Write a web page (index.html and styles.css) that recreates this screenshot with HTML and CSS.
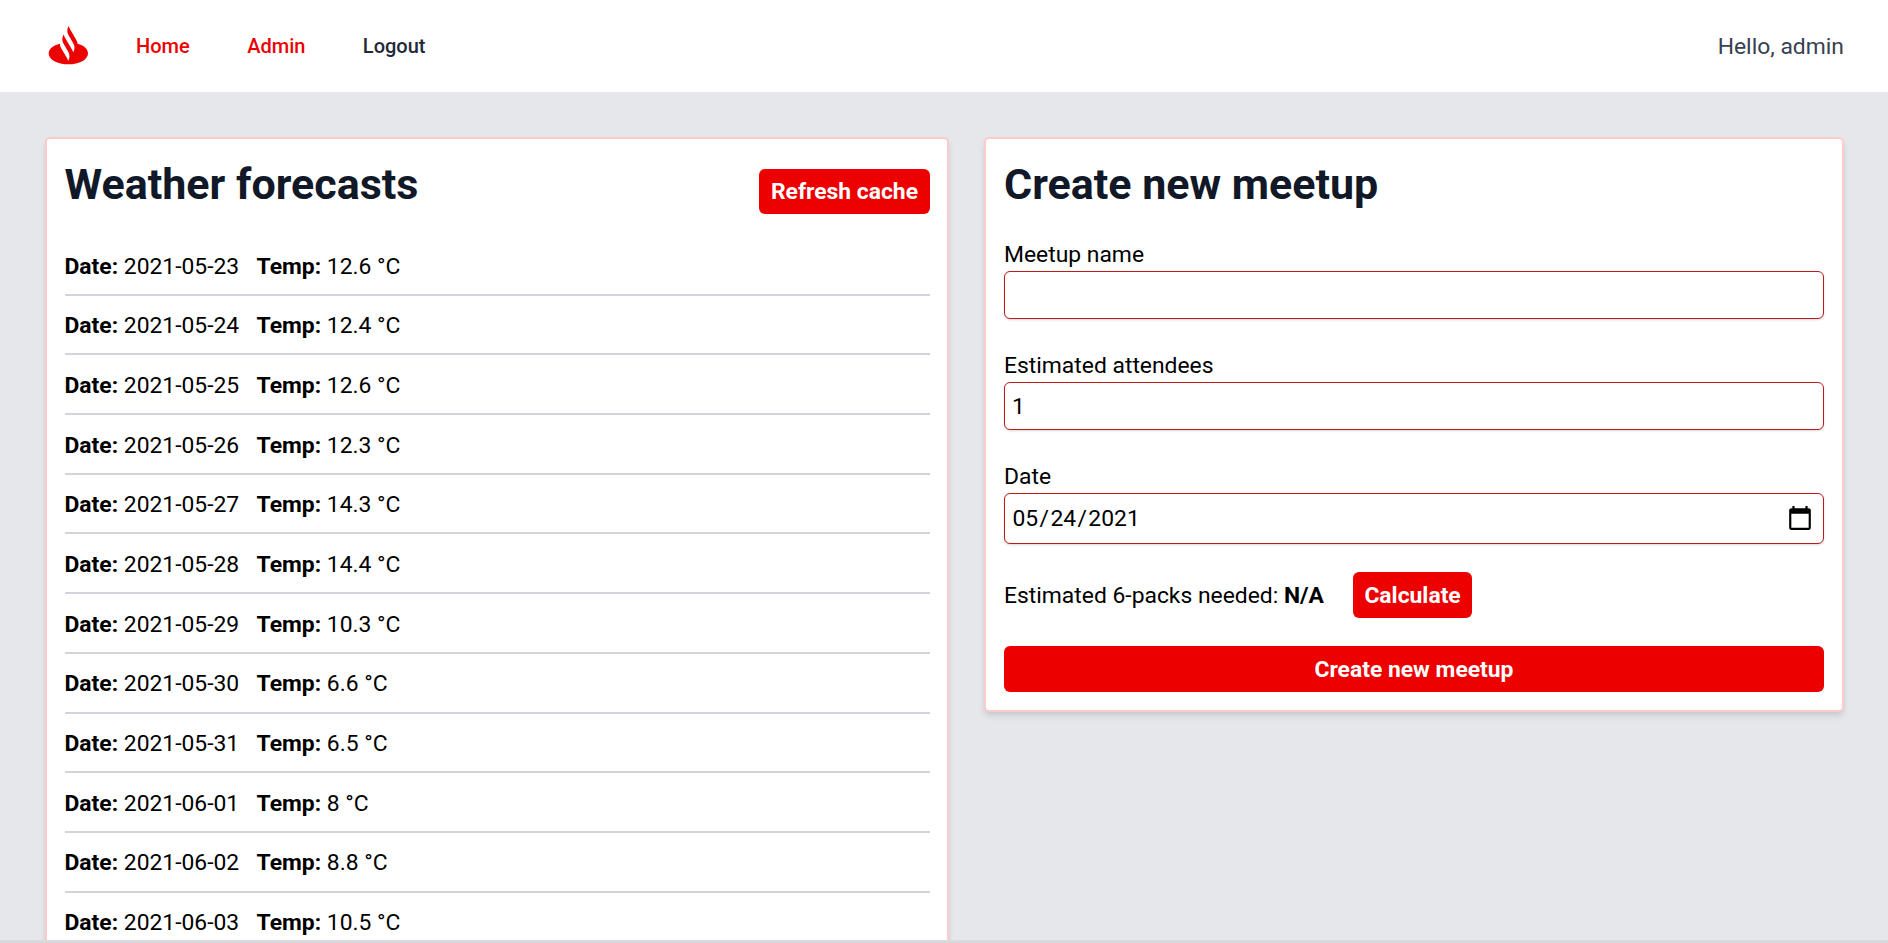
FILE: index.html
```html
<!DOCTYPE html>
<html lang="en">
<head>
<meta charset="utf-8">
<title>Meetups</title>
<link rel="stylesheet" href="styles.css">
</head>
<body>
<header class="header">
  <svg class="logo" viewBox="4.07 2.03 17.56 17.56" aria-hidden="true">
    <path fill="#ec0000" d="M16.1 9.950C16.050 9.350 15.850 8.800 15.490 8.235L13.154 4.200C12.960 3.880 12.830 3.540 12.739 3.184L12.645 3.353C12.060 4.370 12.060 5.610 12.645 6.614L14.511 9.856C15.100 10.870 15.100 12.120 14.511 13.117L14.417 13.287C14.380 12.930 14.210 12.590 14.021 12.269L11.231 7.444C11.040 7.120 10.910 6.780 10.817 6.426L10.722 6.596C10.140 7.610 10.140 8.840 10.722 9.838L12.607 13.099C13.190 14.120 13.190 15.360 12.607 16.360L12.513 16.530C12.480 16.170 12.310 15.830 12.117 15.512L9.761 11.440C9.480 10.950 9.370 10.450 9.380 9.950C6.850 10.550 5.100 11.950 5.100 13.640C5.100 15.980 8.450 17.800 12.600 17.800S20.100 15.980 20.100 13.640C20.100 11.950 18.500 10.550 16.100 9.950Z"/>
  </svg>
  <nav class="nav">
    <a class="nav-link active">Home</a>
    <a class="nav-link active">Admin</a>
    <a class="nav-link">Logout</a>
  </nav>
  <span class="greeting">Hello, admin</span>
</header>
<main class="main">
  <section class="card forecasts">
    <div class="card-head">
      <h1 class="title">Weather forecasts</h1>
      <button class="button">Refresh cache</button>
    </div>
    <ul class="list">
      <li class="row"><span><b>Date:</b> 2021-05-23</span><span><b>Temp:</b> 12.6 °C</span></li>
      <li class="row"><span><b>Date:</b> 2021-05-24</span><span><b>Temp:</b> 12.4 °C</span></li>
      <li class="row"><span><b>Date:</b> 2021-05-25</span><span><b>Temp:</b> 12.6 °C</span></li>
      <li class="row"><span><b>Date:</b> 2021-05-26</span><span><b>Temp:</b> 12.3 °C</span></li>
      <li class="row"><span><b>Date:</b> 2021-05-27</span><span><b>Temp:</b> 14.3 °C</span></li>
      <li class="row"><span><b>Date:</b> 2021-05-28</span><span><b>Temp:</b> 14.4 °C</span></li>
      <li class="row"><span><b>Date:</b> 2021-05-29</span><span><b>Temp:</b> 10.3 °C</span></li>
      <li class="row"><span><b>Date:</b> 2021-05-30</span><span><b>Temp:</b> 6.6 °C</span></li>
      <li class="row"><span><b>Date:</b> 2021-05-31</span><span><b>Temp:</b> 6.5 °C</span></li>
      <li class="row"><span><b>Date:</b> 2021-06-01</span><span><b>Temp:</b> 8 °C</span></li>
      <li class="row"><span><b>Date:</b> 2021-06-02</span><span><b>Temp:</b> 8.8 °C</span></li>
      <li class="row"><span><b>Date:</b> 2021-06-03</span><span><b>Temp:</b> 10.5 °C</span></li>
    </ul>
  </section>
  <section class="card meetup">
    <h1 class="title">Create new meetup</h1>
    <form class="form">
      <label class="field">Meetup name<input class="input" type="text"></label>
      <label class="field">Estimated attendees<input class="input" type="text" value="1"></label>
      <div class="field">Date
        <div class="input date"><span>05<span class="slash">/</span>24<span class="slash">/</span>2021</span>
          <svg class="calendar" viewBox="0 0 24 24"><path d="M20 3h-1V1h-2v2H7V1H5v2H4c-1.100 0-2 .9-2 2v16c0 1.100.9 2 2 2h16c1.100 0 2-.9 2-2V5c0-1.100-.9-2-2-2zm0 18H4V8h16v13z"/></svg>
        </div>
      </div>
      <div class="estimate"><span class="estimate-text">Estimated 6-packs needed: <b>N/A</b></span><button class="button" type="button">Calculate</button></div>
      <button class="button submit" type="button">Create new meetup</button>
    </form>
  </section>
</main>
<div class="page-edge"></div>
</body>
</html>
```
FILE: styles.css
```css
* { box-sizing: border-box; }
body {
  margin: 0;
  height: 943px;
  overflow: hidden;
  display: flex;
  flex-direction: column;
  background: #e5e7eb;
  color: #000;
  font: 22.860px/34px Roboto, sans-serif;
}
b { font-weight: 700; }
.header {
  flex: none;
  height: 92px;
  padding: 0 44px 0 46px;
  display: flex;
  align-items: center;
  background: #fff;
}
.logo { width: 46px; height: 46px; }
.nav { display: flex; gap: 57.500px; margin-left: 44px; }
.nav-link { font-size: 20px; font-weight: 500; color: #1f2937; }
.nav-link.active { color: #ec0000; }
.greeting { margin-left: auto; padding-top: 1px; color: #374151; }
.main {
  flex: none;
  height: 848px;
  overflow: hidden;
  display: grid;
  grid-template-columns: 904px 860px;
  gap: 35px;
  align-items: start;
  padding: 45px 44px 0 45px;
}
.page-edge { flex: none; height: 3px; background: linear-gradient(#dcdee2, #d3d5d9); }
.card {
  padding: 17px 17.500px 18px;
  border: 2px solid #fecaca;
  border-radius: 5px;
  background: #fff;
  box-shadow: 0 5px 7px -1px rgba(0, 0, 0, .1), 0 2px 5px -1px rgba(0, 0, 0, .06);
}
.meetup { padding: 17px 18px 18px; }
.title {
  margin: 0;
  color: #111827;
  font-size: 43px;
  line-height: 56px;
  font-weight: 700;
}
.card-head { display: flex; justify-content: space-between; height: 80px; }
.card-head .button { margin-top: 13px; height: 45px; padding-bottom: 0; }
.button {
  height: 46px;
  padding: 1px 11.500px 0;
  border: 0;
  border-radius: 6px;
  background: #ec0000;
  color: #fff;
  font: 700 22.860px/34px Roboto, sans-serif;
}
.list { margin: 0; padding: 0; list-style: none; }
.row {
  height: 59.700px;
  padding-top: 3.500px;
  display: flex;
  align-items: center;
  gap: 17.300px;
  border-bottom: 2px solid #d1d5db;
}
.form { display: flex; flex-direction: column; margin-top: 26px; }
.field { display: flex; flex-direction: column; margin-bottom: 30px; }
.field:nth-child(3) { margin-bottom: 28px; }
.input {
  height: 48px;
  margin-top: -1px;
  padding: 0 7px;
  border: 1px solid #b91c1c;
  border-radius: 6px;
  background: #fff;
  color: #000;
  font: inherit;
  box-shadow: 0 1px 3px rgba(0, 0, 0, .1), 0 1px 2px rgba(0, 0, 0, .06);
}
.date { height: 51px; display: flex; align-items: center; justify-content: space-between; padding: 0 10.500px 0 7.500px; }
.slash { margin: 0 1.400px; }
.calendar { width: 26px; height: 26px; margin-bottom: 2px; }
.estimate { display: flex; align-items: center; gap: 29px; margin-bottom: 28px; }
.estimate-text { padding-top: 1px; }
```
